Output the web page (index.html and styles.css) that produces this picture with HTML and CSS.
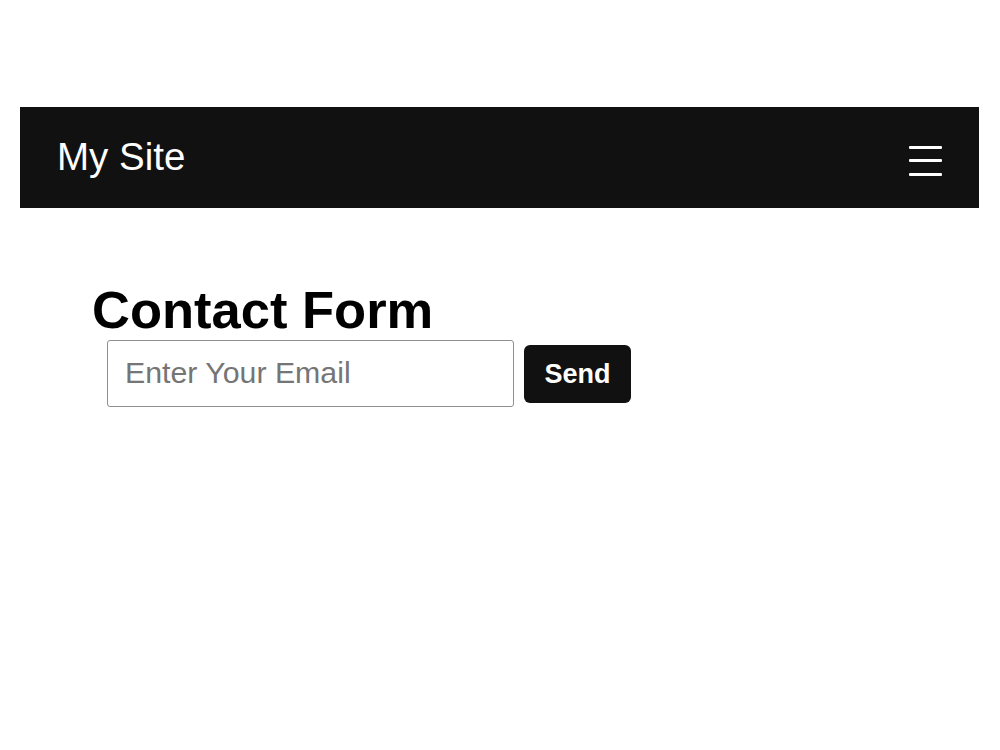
FILE: index.html
```html
<!DOCTYPE html>
<html lang="en">
<head>
<meta charset="utf-8">
<title>My Site</title>
<link rel="stylesheet" href="styles.css">
</head>
<body>
<div class="page">
  <nav class="navbar">
    <div class="brand">My Site</div>
    <button class="menu" aria-label="Menu">
      <span></span><span></span><span></span>
    </button>
  </nav>
  <main class="content">
    <h1 class="title">Contact Form</h1>
    <form class="form">
      <input class="email" type="email" placeholder="Enter Your Email">
      <button class="send" type="button">Send</button>
    </form>
  </main>
</div>
</body>
</html>
```
FILE: styles.css
```css
html, body {
  margin: 0;
  padding: 0;
  background: #ffffff;
  font-family: "Liberation Sans", Arial, sans-serif;
}

.page {
  padding: 107px 21px 0 20px;
}

.navbar {
  height: 101px;
  background: #111111;
  display: flex;
  align-items: center;
  justify-content: space-between;
  padding: 0 37px 0 37px;
}

.brand {
  color: #ffffff;
  font-size: 38.5px;
  line-height: 1;
}

.menu {
  background: none;
  border: 0;
  padding: 0;
  width: 33px;
  display: flex;
  flex-direction: column;
  gap: 10.5px;
  margin-top: 6px;
  cursor: pointer;
}

.menu span {
  display: block;
  height: 3px;
  border-radius: 1px;
  background: #ffffff;
}

.content {
  padding-left: 72px;
}

.title {
  margin: 72px 0 0 0;
  font-size: 52.5px;
  line-height: 60px;
  font-weight: bold;
  color: #000000;
}

.form {
  display: flex;
  align-items: center;
  gap: 10px;
  padding-left: 15px;
}

.email {
  box-sizing: border-box;
  width: 407px;
  height: 67px;
  padding: 0 16px 2px 17px;
  border: 1px solid #8f8f8f;
  border-radius: 3px;
  font-family: "Liberation Sans", Arial, sans-serif;
  font-size: 30.3px;
  color: #000;
  outline: none;
}

.email::placeholder {
  color: #757575;
}

.send {
  box-sizing: border-box;
  width: 107px;
  height: 58px;
  background: #111111;
  color: #ffffff;
  border: 0;
  border-radius: 6px;
  font-family: "Liberation Sans", Arial, sans-serif;
  font-size: 27px;
  font-weight: bold;
  padding: 2px 0 0 0;
  cursor: pointer;
}
```
